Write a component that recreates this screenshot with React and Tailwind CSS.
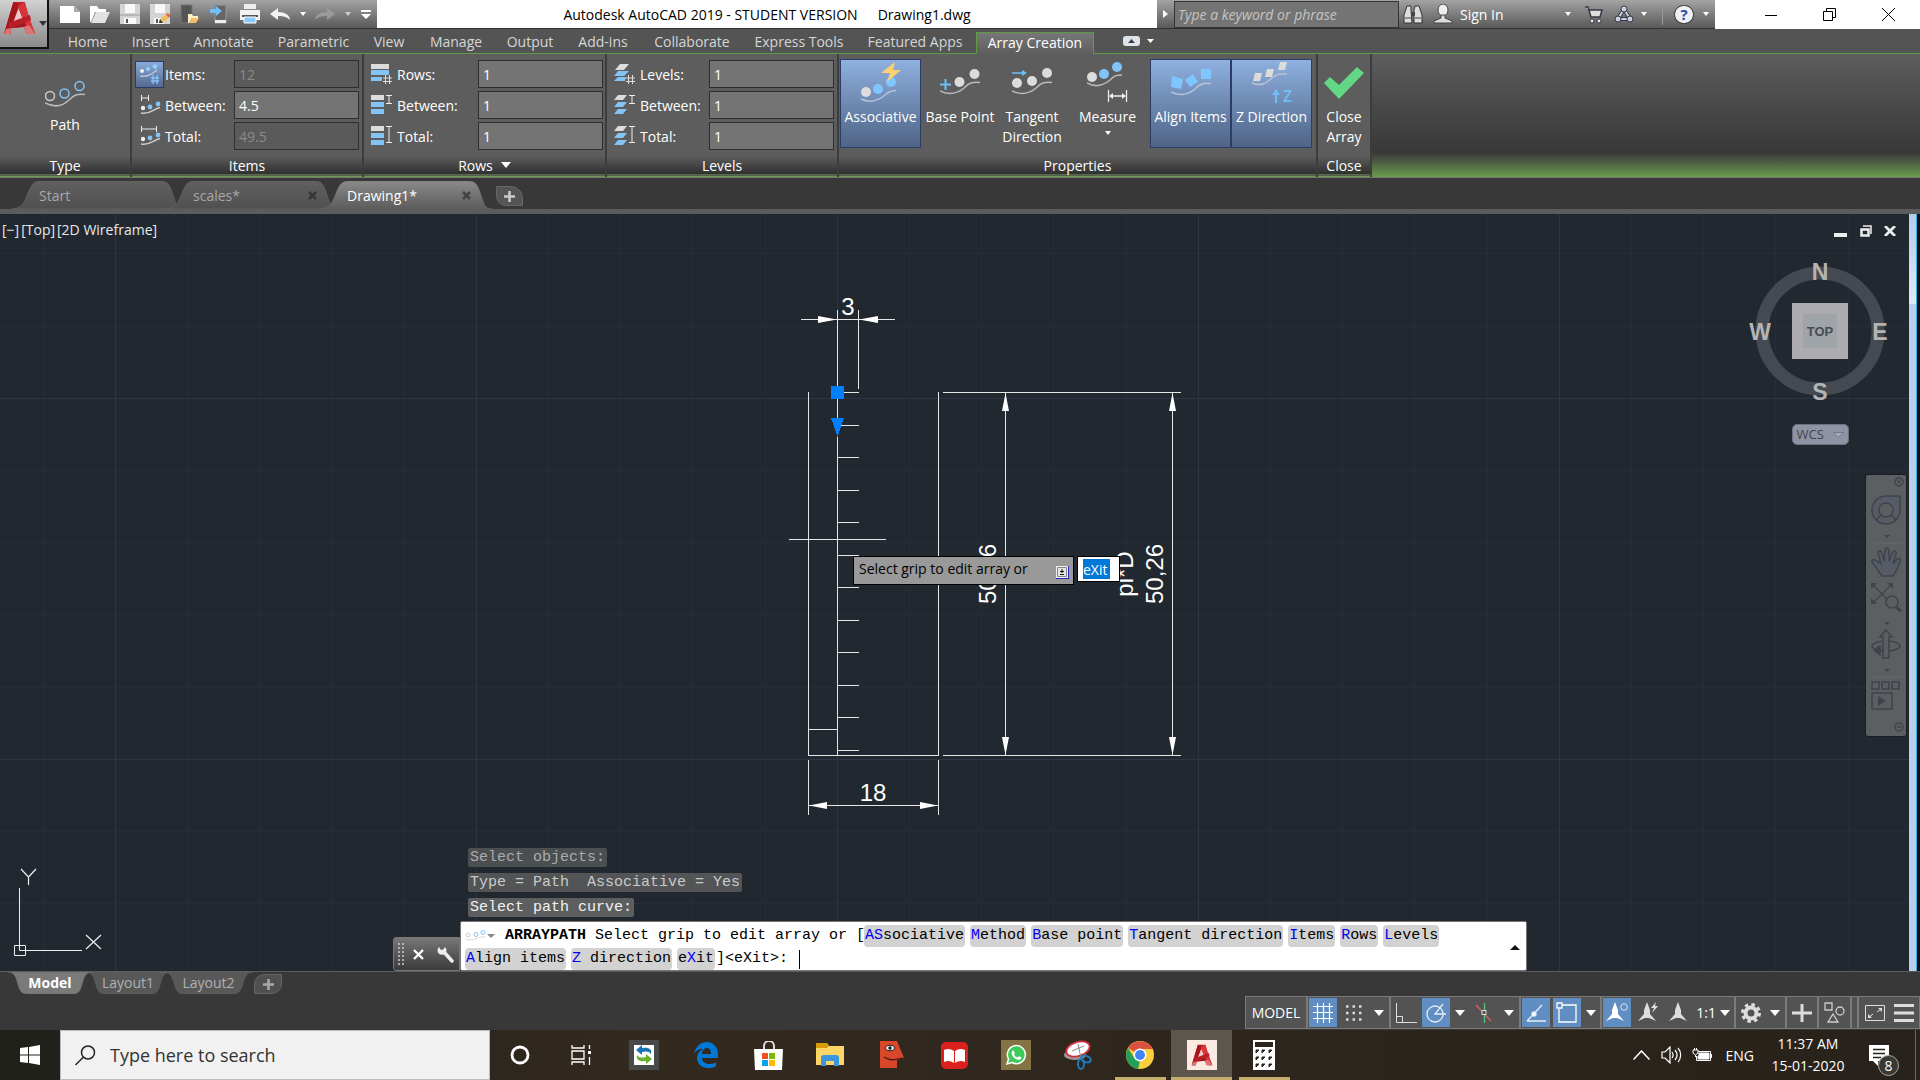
import React from "react";
import clsx from "clsx";

const BLUE = "#82c4f5";
const LIGHT = "#dcdcdc";

const MENU = [
  { name: "Home", width: "w-[65px]" },
  { name: "Insert", width: "w-[61px]" },
  { name: "Annotate", width: "w-[85px]" },
  { name: "Parametric", width: "w-[95px]" },
  { name: "View", width: "w-[56px]" },
  { name: "Manage", width: "w-[78px]" },
  { name: "Output", width: "w-[70px]" },
  { name: "Add-ins", width: "w-[76px]" },
  { name: "Collaborate", width: "w-[102px]" },
  { name: "Express Tools", width: "w-[112px]" },
  { name: "Featured Apps", width: "w-[120px]" },
];

const HISTORY = [
  { text: "Select objects:", tone: "bg-[#4c4f52] text-[#a9abad]" },
  { text: "Type = Path  Associative = Yes", tone: "bg-[#525456] text-[#c9cacb]" },
  { text: "Select path curve:", tone: "bg-[#5c5e60] text-[#f2f2f2]" },
];

const OPTIONS_TOP = [
  ["", "AS", "sociative"],
  ["", "M", "ethod"],
  ["", "B", "ase point"],
  ["", "T", "angent direction"],
  ["", "I", "tems"],
  ["", "R", "ows"],
  ["", "L", "evels"],
];

const OPTIONS_BOTTOM = [
  ["", "A", "lign items"],
  ["", "Z", " direction"],
  ["e", "X", "it"],
];

const Caret = ({ className = "text-white" }) => (
  <svg width="10" height="6" viewBox="0 0 10 6" className={className}>
    <path d="M0 0H10L5 6Z" fill="currentColor" />
  </svg>
);

const LogoA = ({ size }) => (
  <svg width={size} height={size} viewBox="0 0 32 34" preserveAspectRatio="none">
    <path d="M10 1H21L25 16L31 33H23L20 26L8 27L7 33H1L6 15Z" fill="#c42127" />
    <path d="M15 7L19 18L10 21Z" fill="#e9c9c9" />
    <path d="M10 1L16 3L9 22L26 22L20 26L8 27L7 33H1L6 15Z" fill="#a5161c" />
    <path d="M14 5L21 1L25 16L31 33H26L19 17Z" fill="#d8353a" />
    <path d="M5 22L26 14L27 19L6 28Z" fill="#b81e25" />
    <path d="M3 28L8 27L7 33H1ZM20 26L25 24L31 33H23Z" fill="#dd7474" />
  </svg>
);

/* ---------- Title bar ---------- */

const QuickIcon = ({ label, width, children }) => (
  <button aria-label={label} className={clsx("flex items-center justify-center", width)}>
    {children}
  </button>
);

const QuickAccess = () => (
  <div className="flex h-[29px] w-[328px] shrink-0 items-center bg-linear-to-b from-[#a3a3a3] to-[#5a5a5a] pl-[6px] border-b border-[#333]">
    <QuickIcon label="New" width="w-[30px]">
      <svg width="20" height="17"><path d="M0 0H14L20 6V17H0Z" fill="#fff" /><path d="M14 0V6H20Z" fill="#aaa" /></svg>
    </QuickIcon>
    <QuickIcon label="Open" width="w-[30px]">
      <svg width="20" height="17"><path d="M0 0H7L9 3H16V6H5L1 16H0Z" fill="#fff" /><path d="M6 6H20L15 17H1Z" fill="#e2e2e2" /></svg>
    </QuickIcon>
    <QuickIcon label="Save" width="w-[30px]">
      <svg width="20" height="20"><path d="M0 0H20V20H0Z" fill="#d4d4d4" /><path d="M5 0H15V9H5ZM4 14H16V20H4Z" fill="#f8f8f8" /><path d="M6 15H8V19H6Z" fill="#555" /><path d="M0 10H20V12H0Z" fill="#b8b8b8" /></svg>
    </QuickIcon>
    <QuickIcon label="Save as" width="w-[30px]">
      <svg width="20" height="20"><path d="M0 0H20V20H0Z" fill="#d4d4d4" /><path d="M5 0H15V9H5ZM4 14H14V20H4Z" fill="#f8f8f8" /><path d="M6 15H8V19H6Z" fill="#555" /><path d="M9 19L10 15L17 9L20 13L13 19Z" fill="#eebd62" /><path d="M16 10L18 9L20 11V13L18 13Z" fill="#e0605c" /><path d="M9 19L10 15L13 19Z" fill="#333" /></svg>
    </QuickIcon>
    <QuickIcon label="Open from mobile" width="w-[30px]">
      <svg width="20" height="20"><path d="M1 1H12V19H1Z" fill="#555" stroke="#777" /><path d="M8 10H12L13 12H18V14H12L9 19H8Z" fill="#fff0c8" /><path d="M12 14H19L16 19H9Z" fill="#f2c069" /></svg>
    </QuickIcon>
    <QuickIcon label="Save to mobile" width="w-[30px]">
      <svg width="20" height="20"><path d="M5 1H16V19H5Z" fill="#666" stroke="#999" /><path d="M5 16H16V19H5Z" fill="#eee" /><path d="M0 5H6V2L12 7L6 12V9H0Z" fill="#6fc0f8" /></svg>
    </QuickIcon>
    <QuickIcon label="Plot" width="w-[30px]">
      <svg width="20" height="20"><path d="M4 0H16V5H4Z" fill="#eee" /><path d="M0 6H20V16H0Z" fill="#f2f2f2" /><path d="M2 11H18V13H2Z" fill="#555" /><path d="M4 13H16V19H4Z" fill="#8bcaf8" stroke="#fff" /></svg>
    </QuickIcon>
    <QuickIcon label="Undo" width="w-[30px]">
      <svg width="21" height="13"><path d="M0 6L8 0V4C15 4 20 7 20 12C17 9 14 8 8 8V12Z" fill="#f2f2f2" /></svg>
    </QuickIcon>
    <QuickIcon label="Undo list" width="w-[15px]">
      <svg width="6" height="4"><path d="M0 0H6L3 4Z" fill="#fff" /></svg>
    </QuickIcon>
    <QuickIcon label="Redo" width="w-[30px]">
      <svg width="21" height="13"><path d="M20 6L12 0V4C5 4 0 7 0 12C3 9 6 8 12 8V12Z" fill="#9a9a9a" /></svg>
    </QuickIcon>
    <QuickIcon label="Redo list" width="w-[15px]">
      <svg width="6" height="4"><path d="M0 0H6L3 4Z" fill="#ccc" /></svg>
    </QuickIcon>
    <QuickIcon label="Customize" width="w-[21px]">
      <svg width="10" height="9"><path d="M0 0H10V2H0ZM0 4H10L5 9Z" fill="#fff" /></svg>
    </QuickIcon>
  </div>
);

const InfoCenter = () => (
  <div className="flex h-[29px] w-[558px] shrink-0 items-center border-b border-[#333] bg-linear-to-b from-[#a3a3a3] to-[#5a5a5a] text-[14px] text-white">
    <button aria-label="Collapse search" className="flex w-[17px] justify-center">
      <svg width="6" height="8"><path d="M0 0L5 4L0 8Z" fill="#fff" /></svg>
    </button>
    <input
      aria-label="Search"
      placeholder="Type a keyword or phrase"
      className="h-[27px] w-[225px] border border-[#333] bg-[#747474] px-[3px] text-[14px] italic placeholder:text-[#c4c4c4]"
    />
    <button aria-label="Find" className="flex w-[27px] justify-center">
      <svg width="20" height="19"><path d="M4 1H8V5L9 18H1V10ZM12 1H16L19 10V18H11V5Z" fill="#ddd" stroke="#333" /><path d="M8 7H12V11H8Z" fill="#444" /><path d="M2 13H8M12 13H18" stroke="#444" /></svg>
    </button>
    <button className="flex items-center gap-[7px] pl-[7px]">
      <svg width="20" height="20"><ellipse cx="10" cy="6" rx="5" ry="6" fill="#eee" stroke="#444" /><path d="M8 11H12V14L19 17V19H1V17L8 14Z" fill="#ddd" stroke="#444" /></svg>
      Sign In
    </button>
    <button aria-label="Account menu" className="ml-auto mr-[13px]"><svg width="6" height="4"><path d="M0 0H6L3 4Z" fill="#fff" /></svg></button>
    <button aria-label="App store" className="mr-[10px]">
      <svg width="20" height="19"><path d="M1 2H4L7 12H16L18 5H5" fill="#ddd" stroke="#34384a" strokeWidth="1.500" /><circle cx="8" cy="16" r="2" fill="#eee" stroke="#34384a" /><circle cx="15" cy="16" r="2" fill="#eee" stroke="#34384a" /></svg>
    </button>
    <button aria-label="Stay connected" className="mr-[9px] flex items-center gap-[7px]">
      <svg width="20" height="18"><path d="M10 4L4 14H16Z" fill="none" stroke="#34384a" strokeWidth="4" strokeLinejoin="round" /><path d="M10 4L4 14H16Z" fill="none" stroke="#ccd0dc" strokeWidth="2" /><circle cx="10" cy="4" r="3" fill="#ccd0dc" stroke="#34384a" /><circle cx="4" cy="14" r="3" fill="#ccd0dc" stroke="#34384a" /><circle cx="16" cy="14" r="3" fill="#ccd0dc" stroke="#34384a" /></svg>
      <svg width="6" height="4"><path d="M0 0H6L3 4Z" fill="#fff" /></svg>
    </button>
    <span className="mx-[6px] h-[22px] w-px bg-[#999]" />
    <button aria-label="Help" className="mx-[5px] flex h-[19px] w-[20px] items-center justify-center rounded-full border border-[#333] bg-[#eef1f6] text-[15px] font-bold leading-none text-[#2b4ba0]">
      ?
    </button>
    <button aria-label="Help menu" className="ml-[4px] mr-[6px]"><svg width="6" height="4"><path d="M0 0H6L3 4Z" fill="#fff" /></svg></button>
  </div>
);

const WindowButtons = () => (
  <div className="flex h-[29px] w-[205px] shrink-0 items-center bg-white">
    <button aria-label="Minimize" className="ml-[27px] flex w-[58px] justify-center"><svg width="12" height="12"><path d="M0 6.500H12" stroke="#000" /></svg></button>
    <button aria-label="Restore" className="flex w-[58px] justify-center"><svg width="13" height="13"><path d="M.5 3.500H9.500V12.500H.5ZM3.500 3V.5H12.500V9.500H10" fill="none" stroke="#000" /></svg></button>
    <button aria-label="Close" className="flex w-[60px] justify-center"><svg width="13" height="13"><path d="M0 0L13 13M13 0L0 13" stroke="#000" /></svg></button>
  </div>
);

const Header = () => (
  <header className="relative z-10 flex bg-[#545454]">
    <button aria-label="Application menu" className="flex h-[49px] w-[49px] shrink-0 items-start gap-[3px] border-b-2 border-r-2 border-[#111] bg-linear-to-b from-[#d2d2d2] to-[#8a8a8a] pl-[3px] pt-px">
      <LogoA size={34} />
      <svg width="8" height="5" className="mt-[20px]"><path d="M0 0H8L4 5Z" fill="#2c3540" /></svg>
    </button>
    <div className="min-w-0 flex-1">
      <div className="flex">
        <QuickAccess />
        <h1 className="flex h-[29px] flex-1 items-center justify-center gap-[20px] border-b border-[#333] bg-white text-[14px] text-black">
          <span>Autodesk AutoCAD 2019 - STUDENT VERSION</span>
          <span>Drawing1.dwg</span>
        </h1>
        <InfoCenter />
        <WindowButtons />
      </div>
      <nav className="flex h-[24px] pl-[6px] text-[14px] leading-[20px] text-[#d6d6d6]">
        {MENU.map((m) => (
          <button key={m.name} className={clsx("shrink-0 whitespace-nowrap pt-[2px] text-center", m.width)}>
            {m.name}
          </button>
        ))}
        <button className="mb-[-1px] ml-px mt-[3px] w-[118px] border border-b-0 border-[#5f9a45] bg-linear-to-b from-[#777] to-[#5e5e5e] pb-px leading-[18px] text-white">
          Array Creation
        </button>
        <button aria-label="Minimize ribbon" className="ml-[29px] flex items-center gap-[7px]">
          <svg width="17" height="10"><rect width="17" height="10" rx="3" fill="#dfe3ea" /><path d="M5 7L8.500 3L12 7Z" fill="#3b4050" /></svg>
          <svg width="7" height="4"><path d="M0 0H7L3.500 4Z" fill="#fff" /></svg>
        </button>
      </nav>
    </div>
  </header>
);

/* ---------- Ribbon ---------- */

const Panel = ({ title, width, caret, children }) => (
  <section className={clsx("flex shrink-0 flex-col border-r-2 border-[#3d3d3d] bg-[#5d5d5d]", width)}>
    <div className="h-[102px]">{children}</div>
    <h2 className="flex h-[19px] items-center justify-center gap-[8px] border-b border-[#4d7239] bg-linear-to-b from-[#5d5d5d] to-[#303030] text-[14px] text-white">
      {title}
      {caret && <Caret />}
    </h2>
    <div className="h-[2px] border-b border-[#6a9a50] bg-[#5a5a5a]" />
  </section>
);

const ItemIcon = ({ kind }) => (
  <svg width="22" height="20" fill="none">
    {kind === "count" && <path d="M14 11V20M18 11V20M12 14H20M12 17H20" stroke={BLUE} strokeWidth="1.300" />}
    {kind === "count" ? (
      <>
        <circle cx="3" cy="7" r="2" fill="#eee" />
        <circle cx="9" cy="5" r="2" fill="#8fd0ff" />
        <circle cx="16" cy="2.500" r="2.300" fill="#8fd0ff" />
        <path d="M1 12C8 13 12 11 18 6" stroke="#bcc8d8" strokeWidth="1.500" />
      </>
    ) : (
      <>
        <circle cx="4" cy="13" r="2.200" fill="#eee" />
        <circle cx="11" cy="12" r="2.400" fill={BLUE} />
        <circle cx="19" cy="9" r="2.400" fill={BLUE} />
        <path d="M2 18C11 20 14 14 21 12.500" stroke="#ccc" strokeWidth="1.500" />
        {kind === "between" ? (
          <path d="M2.500 0V6M9.500 0V6M3 3H9" stroke="#eee" />
        ) : (
          <path d="M2.500 0V6M17.500 0V6M3 3H17" stroke="#eee" />
        )}
      </>
    )}
  </svg>
);

const MeasureMark = ({ kind }) => {
  if (kind === "count") return <path d="M14.500 11V20M18.500 11V20M12 14H21M12 17.500H21" stroke="#ddd" fill="none" />;
  if (kind === "between") return <path d="M15 .5H21M15 8.500H21M18 1V8" stroke="#eee" fill="none" />;
  return <path d="M15 .5H21M15 16.500H21M18 1V16" stroke="#eee" fill="none" />;
};

const RowIcon = ({ kind }) => (
  <svg width="22" height="21">
    <path d={kind === "count" ? "M0 0H18V5H0Z" : "M0 0H13V5H0Z"} fill={LIGHT} />
    <path d={kind === "count" ? "M0 6H18V11H0ZM0 13H11V17H0Z" : "M0 7H13V12H0ZM0 14H13V19H0Z"} fill={BLUE} />
    <MeasureMark kind={kind} />
  </svg>
);

const LevelIcon = ({ kind }) => (
  <svg width="22" height="21">
    <path d={kind === "count" ? "M1 6L6 0H15L10 6Z" : "M0 5L4 0H13L9 5Z"} fill={LIGHT} />
    <path d={kind === "count" ? "M0 12L4 7H15L10 12ZM0 17L4 13H12L11 17Z" : "M0 12L4 7H13L9 12ZM0 19L4 14H13L9 19Z"} fill={BLUE} />
    <MeasureMark kind={kind} />
  </svg>
);

const Fields = ({ group, rows, labelWidth }) => (
  <div className="flex flex-col gap-[3px] pl-[3px] pt-[6px]">
    {rows.map((r) => (
      <div key={r.label} className="flex h-[28px] items-center text-[14px] text-white">
        <span
          className={clsx(
            "flex w-[29px] shrink-0 items-center justify-center",
            r.active && "h-[27px] border border-[#2c3c66] bg-linear-to-b from-[#8aaadb] to-[#53698f]"
          )}
        >
          {r.icon}
        </span>
        <label htmlFor={group + r.label} className={clsx("shrink-0 pl-px", labelWidth)}>
          {r.label}:
        </label>
        <input
          id={group + r.label}
          defaultValue={r.value}
          disabled={r.disabled}
          className={clsx(
            "h-[28px] w-[125px] border border-[#2e2e2e] px-[4px] text-[14px]",
            r.disabled ? "bg-[#5a5a5a] text-[#8c8c8c]" : "bg-[#747474] text-white"
          )}
        />
      </div>
    ))}
  </div>
);

const BigButton = ({ icon, lines, width, active, caret }) => (
  <button
    className={clsx(
      "flex h-[89px] shrink-0 flex-col items-center whitespace-nowrap text-[14px] leading-[20px] text-white",
      width,
      active && "border border-[#2c3c66] bg-linear-to-b from-[#8fb0e0] to-[#4f6586]",
      !active && "border border-transparent"
    )}
  >
    <span className="flex h-[47px] items-start pt-[2px]">{icon}</span>
    {lines.map((l) => (
      <span key={l}>{l}</span>
    ))}
    {caret && <svg width="6" height="4" className="mt-[4px]"><path d="M0 0H6L3 4Z" fill="#fff" /></svg>}
  </button>
);

const PathIcon = () => (
  <svg width="40" height="28" fill="none" strokeWidth="1.500">
    <circle cx="5" cy="16" r="4.500" stroke="#ccc" />
    <circle cx="19.500" cy="13.500" r="4.500" stroke={BLUE} />
    <circle cx="34.500" cy="6" r="4.500" stroke={BLUE} />
    <path d="M0 23C8 27 17 27 24 20C30 14 33 14 40 14.500" stroke="#bbb" />
  </svg>
);

const AssociativeIcon = () => (
  <svg width="40" height="42" fill="none">
    <circle cx="5" cy="30" r="5" fill={LIGHT} />
    <circle cx="17" cy="27" r="5" fill="#7fc6ff" />
    <circle cx="30" cy="20" r="5" fill="#7fc6ff" />
    <path d="M0 37C10 42 18 38 24 33C29 28 31 29 35 28.500" stroke="#b9c4d6" strokeWidth="1.500" />
    <path d="M34 0L20 11L29 11L26 20L40 8L32 8Z" fill="#ffd071" />
  </svg>
);

const BasePointIcon = () => (
  <svg width="40" height="36" fill="none">
    <path d="M5.500 17V28M0 22.500H11" stroke="#6fc0f8" strokeWidth="2" />
    <circle cx="19.500" cy="20" r="5" fill={LIGHT} />
    <circle cx="34.500" cy="12" r="5" fill={LIGHT} />
    <path d="M0 29C8 33 17 32 24 26C30 20 33 20 40 20.500" stroke="#bbb" strokeWidth="1.500" />
  </svg>
);

const TangentIcon = () => (
  <svg width="40" height="36" fill="none">
    <path d="M0 11H11" stroke="#6fc0f8" strokeWidth="1.500" />
    <path d="M10 8L15 11L10 14Z" fill="#6fc0f8" />
    <circle cx="5" cy="21" r="5" fill={LIGHT} />
    <circle cx="20" cy="19" r="5" fill={LIGHT} />
    <circle cx="35" cy="11" r="5" fill={LIGHT} />
    <path d="M0 29C8 33 17 32 24 26C30 20 33 20 40 20.500" stroke="#bbb" strokeWidth="1.500" />
  </svg>
);

const MeasureIcon = () => (
  <svg width="41" height="42" fill="none">
    <circle cx="5" cy="15" r="5" fill={LIGHT} />
    <circle cx="17" cy="12" r="5" fill={BLUE} />
    <circle cx="30" cy="5" r="5" fill={BLUE} />
    <path d="M0 21C9 26 17 23 23 18C28 13 30 13 35 13" stroke="#bbb" strokeWidth="1.500" />
    <path d="M21.500 28V40M39.500 28V40M23 34H38" stroke="#eee" strokeWidth="1.300" />
    <path d="M22 34L26 31V37ZM39 34L35 31V37Z" fill="#eee" />
  </svg>
);

const AlignIcon = () => (
  <svg width="40" height="36" fill="none">
    <path d="M1 14L12 17L10 27L0 25ZM14 18L22 12L27 20L19 25ZM30 7H40V17H30Z" fill="#7fc6ff" />
    <path d="M0 30C8 34 17 33 24 27C30 21 33 21 40 21.500" stroke="#b9c4d6" strokeWidth="1.500" />
  </svg>
);

const ZIcon = () => (
  <svg width="46" height="45" fill="none">
    <path d="M6 11H13L11 19H4ZM18 7H25L23 15H16ZM31 0H38L36 8H29Z" fill={LIGHT} />
    <path d="M3 21C12 25 18 21 24 15C29 11 32 12 38 12" stroke="#b9c4d6" strokeWidth="1.500" />
    <path d="M27 41V31" stroke="#6fc0f8" strokeWidth="2" />
    <path d="M23 33L27 27L31 33Z" fill="#6fc0f8" />
    <text x="34" y="40" fill="#6fc0f8" fontSize="16" fontWeight="600">Z</text>
  </svg>
);

const CheckIcon = () => (
  <svg width="40" height="42">
    <path d="M0 21L6 15L15 23L33 5L40 11L15 37Z" fill="#62d886" />
  </svg>
);

const Ribbon = () => (
  <div className="flex h-[125px] border-b border-t border-b-[#777] border-t-[#5f9a45] bg-linear-to-b from-[#5d5d5d] via-[#383838] via-80% to-[#6a9c4b]">
    <Panel title="Type" width="w-[132px]">
      <button className="flex h-full w-full flex-col items-center gap-[6px] pb-[14px] pt-[26px] text-[14px] text-white">
        <PathIcon />
        Path
      </button>
    </Panel>
    <Panel title="Items" width="w-[232px]">
      <Fields
        group="items"
        labelWidth="w-[70px]"
        rows={[
          { label: "Items", value: "12", disabled: true, active: true, icon: <ItemIcon kind="count" /> },
          { label: "Between", value: "4.5", icon: <ItemIcon kind="between" /> },
          { label: "Total", value: "49.5", disabled: true, icon: <ItemIcon kind="total" /> },
        ]}
      />
    </Panel>
    <Panel title="Rows" width="w-[243px]" caret>
      <Fields
        group="rows"
        labelWidth="w-[82px]"
        rows={[
          { label: "Rows", value: "1", icon: <RowIcon kind="count" /> },
          { label: "Between", value: "1", icon: <RowIcon kind="between" /> },
          { label: "Total", value: "1", icon: <RowIcon kind="total" /> },
        ]}
      />
    </Panel>
    <Panel title="Levels" width="w-[232px]">
      <Fields
        group="levels"
        labelWidth="w-[70px]"
        rows={[
          { label: "Levels", value: "1", icon: <LevelIcon kind="count" /> },
          { label: "Between", value: "1", icon: <LevelIcon kind="between" /> },
          { label: "Total", value: "1", icon: <LevelIcon kind="total" /> },
        ]}
      />
    </Panel>
    <Panel title="Properties" width="w-[479px]">
      <div className="flex pl-px pt-[5px]">
        <BigButton active width="w-[81px]" icon={<AssociativeIcon />} lines={["Associative"]} />
        <BigButton width="w-[78px]" icon={<BasePointIcon />} lines={["Base Point"]} />
        <BigButton width="w-[66px]" icon={<TangentIcon />} lines={["Tangent", "Direction"]} />
        <BigButton width="w-[85px]" icon={<MeasureIcon />} lines={["Measure"]} caret />
        <BigButton active width="w-[81px]" icon={<AlignIcon />} lines={["Align Items"]} />
        <BigButton active width="w-[81px]" icon={<ZIcon />} lines={["Z Direction"]} />
      </div>
    </Panel>
    <Panel title="Close" width="w-[54px]">
      <div className="flex justify-center pt-[5px]">
        <BigButton width="w-[52px]" icon={<CheckIcon />} lines={["Close", "Array"]} />
      </div>
    </Panel>
  </div>
);

/* ---------- File tabs ---------- */

const FileTab = ({ name, closable, active }) => (
  <div className={clsx("relative -mr-[18px] h-[28px] w-[172px] text-[14px]", active ? "z-10 text-white" : "text-[#a8a8a8]")}>
    <svg viewBox="0 0 172 28" preserveAspectRatio="none" className="absolute inset-0 h-full w-full">
      <defs>
        <linearGradient id={"tab" + name} x1="0" y1="0" x2="0" y2="1">
          <stop offset="0" stopColor={active ? "#8a8a8a" : "#606060"} />
          <stop offset="1" stopColor={active ? "#5c5c5c" : "#505050"} />
        </linearGradient>
      </defs>
      <path d="M0 28C10 27 12 22 16 12C20 2 22 0 30 0H148C156 0 158 4 161 14C164 23 165 28 172 28Z" fill={`url(#tab${name})`} stroke="#6c6c6c" strokeWidth=".5" />
    </svg>
    <div className="relative flex h-full items-center justify-between px-[27px]">
      <button>{name}</button>
      {closable && (
        <button aria-label={"Close " + name} className="-mr-[6px]">
          <svg width="9" height="9"><path d="M1 1L8 8M8 1L1 8" stroke={active ? "#444" : "#363636"} strokeWidth="2.500" /></svg>
        </button>
      )}
    </div>
  </div>
);

const FileTabs = () => (
  <div className="border-b-[5px] border-[#5c5c5c] bg-[#383838] pt-[3px]">
    <div className="flex pl-[12px]">
      <FileTab name="Start" />
      <FileTab name="scales*" closable />
      <FileTab name="Drawing1*" closable active />
      <button aria-label="New tab" className="ml-[22px] mt-[5px] flex h-[20px] w-[27px] items-center justify-center rounded-tr-[12px] rounded-bl-[10px] border border-[#666] bg-[#555]">
        <svg width="11" height="11"><path d="M5.500 0V11M0 5.500H11" stroke="#ccc" strokeWidth="2.500" /></svg>
      </button>
    </div>
  </div>
);

/* ---------- Drawing area ---------- */

const TICKS = [178.5, 211, 243.5, 276.5, 308.5, 341.5, 373.5, 406.5, 438.5, 471.5, 503.5, 536.5];

const Drawing = () => (
  <svg className="absolute inset-0 h-full w-full" shapeRendering="crispEdges" fontFamily="Liberation Sans, Arial, sans-serif">
    <defs>
      <pattern id="grid" x="115" y="184" width="361" height="361" patternUnits="userSpaceOnUse">
        <path d="M72.500 0V361M144.500 0V361M216.500 0V361M289.500 0V361M0 72.500H361M0 144.500H361M0 216.500H361M0 289.500H361" stroke="#262d39" />
        <path d="M.5 0V361M0 .5H361" stroke="#2d3442" strokeWidth="1" />
      </pattern>
    </defs>
    <rect width="100%" height="100%" fill="url(#grid)" />
    <g stroke="#e6e6e6" fill="none">
      <path d="M808.500 178V541.500H938.500V178" />
      <path d="M837.500 96V541M858.500 96V175M801 105.500H895" />
      <path d="M808 515.500H837M789 325.500H886" />
      {TICKS.map((y) => (
        <path key={y} d={`M837 ${y}H859`} />
      ))}
      <path d="M943 178.500H1181M943 541.500H1181M1005.500 179V541M1172.500 179V541" />
      <path d="M808.500 546V601M938.500 546V601M808 591.500H938" />
    </g>
    <g fill="#fff" shapeRendering="auto">
      <path d="M818 102L837 105.500L818 109ZM878 102L859 105.500L878 109Z" />
      <path d="M1005.500 179L1002 197H1009ZM1005.500 541L1002 523H1009Z" />
      <path d="M1172.500 179L1169 197H1176ZM1172.500 541L1169 523H1176Z" />
      <path d="M809 591.500L827 588V595ZM938 591.500L920 588V595Z" />
      <g fontSize="24" textAnchor="middle">
        <text x="848" y="101">3</text>
        <text x="873" y="587">18</text>
        <text transform="translate(996 360) rotate(-90)">50,26</text>
        <text transform="translate(1163 360) rotate(-90)">50,26</text>
        <text transform="translate(1133 360) rotate(-90)">pi*D</text>
      </g>
    </g>
    <path d="M831 172H844V185H831ZM831 204H844L837.500 223Z" fill="#0080ff" />
  </svg>
);

const DynamicPrompt = () => (
  <div className="absolute left-[853px] top-[342px] flex items-start gap-[3px]">
    <div className="flex h-[29px] w-[221px] items-start justify-between border border-black bg-[#999] pl-[5px] pr-[4px] pt-[2px] text-[14px] leading-[20px] text-black">
      <label htmlFor="grip">Select grip to edit array or</label>
      <svg width="13" height="13" className="mt-[7px]"><path d="M0 0H13V13H0Z" fill="#2a2ac8" /><path d="M0 0H12V12H0Z" fill="#eee" /><path d="M1.500 1.500H10.500V10.500H1.500Z" fill="#e4e4e4" stroke="#888" /><path d="M6 3V7M4 5.500H8M4 8.500H8" stroke="#111" /></svg>
    </div>
    <div className="h-[26px] w-[43px] border border-black bg-white pl-[5px] pt-[2px]">
      <input id="grip" defaultValue="eXit" className="block h-[20px] w-[27px] bg-[#0078d7] text-[14px] text-white" />
    </div>
  </div>
);

const UcsIcon = () => (
  <svg width="92" height="92" className="absolute bottom-[15px] left-[13px]" fill="none" stroke="#eee">
    <path d="M8 5L15.500 13V21M23 5L15.500 13" strokeWidth="1.200" />
    <path d="M73 71L88 85M88 71L73 85" strokeWidth="1.200" />
    <path d="M6.500 24V86.500H69" strokeWidth="1" />
    <path d="M1.500 81.500H12.500V91.500H1.500Z" />
  </svg>
);

const ViewCube = () => (
  <div className="absolute right-[17px] top-[45px] flex w-[144px] flex-col items-center">
    <svg width="144" height="146" fontFamily="Liberation Sans, Arial, sans-serif" fontWeight="bold" textAnchor="middle">
      <circle cx="72" cy="72" r="58" fill="none" stroke="#454a52" strokeWidth="13" />
      <rect x="44" y="44" width="56" height="56" fill="#acacae" />
      <rect x="55" y="55" width="34" height="34" fill="#9fa4a9" />
      <g fill="#b4b4b4" fontSize="23">
        <text x="72" y="21">N</text>
        <text x="72" y="141">S</text>
        <text x="12" y="81">W</text>
        <text x="132" y="81">E</text>
      </g>
      <text x="72" y="77" fontSize="13" fill="#474d56">TOP</text>
    </svg>
    <button className="mt-[19px] flex h-[21px] w-[57px] items-center justify-between rounded-[5px] border border-[#6d7080] bg-[#9093a3] px-[4px] text-[13px] text-[#41454f]">
      WCS
      <svg width="11" height="6"><path d="M.5 .5H10.500L5.500 5.500Z" fill="#a8abba" stroke="#747888" /></svg>
    </button>
  </div>
);

const NavBar = () => (
  <div className="absolute right-[2px] top-[260px] flex h-[263px] w-[42px] flex-col items-center rounded-[3px] border border-[#1a1e24] bg-[#5b5f62] text-[#3f444c]">
    <svg width="36" height="259" fill="none" stroke="currentColor" strokeWidth="1.500">
      <circle cx="31" cy="7" r="4" />
      <path d="M29 5L33 9M33 5L29 9" strokeWidth="1" />
      <g fill="#565b66">
        <path d="M18 21H32V35A14 14 0 1 1 18 21Z" />
        <circle cx="18" cy="35" r="7" fill="#5b5f62" />
        <path d="M13 40L8 45M23 40L28 45" />
        <path d="M14 101L9 94C6 89 3 88 4 85C7 84 10 86 13 89L10 78C10 75 13 75 14 78L16 86L17 75C18 72 21 73 21 76L21 86L25 77C27 75 29 77 28 79L25 89L29 84C32 82 33 84 32 87C30 93 28 97 25 101Z" />
      </g>
      <path d="M16 60H22L19 63ZM16 147H22L19 150ZM16 194H22L19 197Z" fill="currentColor" strokeWidth="0" />
      <path d="M5 110L23 128M23 110L5 128" strokeWidth="1.300" />
      <path d="M3 108V114L9 108ZM25 108V114L19 108ZM3 129V123L9 129Z" fill="currentColor" strokeWidth="0" />
      <circle cx="24" cy="127" r="6" fill="#5b5f62" />
      <path d="M28 132L33 136" strokeWidth="3" />
      <ellipse cx="18" cy="171" rx="14" ry="5" />
      <path d="M15 183V162H12L18 155L24 162H21V183Z" fill="#5b5f62" />
      <path d="M6 175L12 171V180Z" fill="currentColor" />
      <path d="M2 68H34M2 202H34" stroke="#666b6e" strokeWidth="1" />
      <path d="M4 207H11V214H4ZM14 207H21V214H14ZM24 207H31V214H24ZM4 218H24V234H4Z" />
      <path d="M10 221L18 226L10 231Z" fill="currentColor" strokeWidth="0" />
      <circle cx="31" cy="252" r="4" />
      <path d="M29 252H33" />
    </svg>
  </div>
);

const Option = ({ parts }) => (
  <button className="h-[22px] whitespace-pre rounded-[4px] bg-[#d2d2d2] px-px text-black">
    {parts[0]}
    <span className="text-[#0000f0]">{parts[1]}</span>
    {parts[2]}
  </button>
);

const CommandWindow = () => (
  <div className="absolute inset-x-0 bottom-0 pl-[393px]">
    <ul className="mb-[4px] ml-[75px] flex flex-col items-start gap-[6px] font-['Liberation_Mono',monospace] text-[15px]">
      {HISTORY.map((h) => (
        <li key={h.text} className={clsx("h-[19px] whitespace-pre rounded-[2px] px-[2px] leading-[19px]", h.tone)}>
          {h.text}
        </li>
      ))}
    </ul>
    <div className="flex items-end">
      <div className="flex h-[34px] w-[67px] items-center gap-[9px] rounded-l-[3px] border border-[#777] bg-linear-to-b from-[#777] to-[#3c3c3c] pl-[4px]">
        <svg width="6" height="22"><path d="M1 0V22M5 0V22" stroke="#ccc" strokeWidth="1.500" strokeDasharray="2 2" /></svg>
        <button aria-label="Close command line"><svg width="11" height="11"><path d="M1 1L10 10M10 1L1 10" stroke="#fff" strokeWidth="2.300" /></svg></button>
        <button aria-label="Customize command line" className="ml-[4px]">
          <svg width="17" height="18"><path d="M6 6L15 16" stroke="#eee" strokeWidth="3.500" strokeLinecap="round" /><path d="M2 2A4.500 4.500 0 1 0 8 2L6 5H4Z" fill="#eee" /></svg>
        </button>
      </div>
      <div className="flex h-[50px] w-[1067px] items-center rounded-[2px] border border-[#777] bg-white pl-[4px] pr-[6px] pt-[3px] font-['Liberation_Mono',monospace] text-[15px] text-black">
        <div className="flex flex-1 flex-col gap-px">
          <div className="flex items-center gap-[5px]">
            <span className="flex w-[35px] items-center gap-px">
              <svg width="21" height="11" fill="none"><circle cx="3" cy="5" r="2" stroke="#ccc" /><circle cx="11" cy="4.500" r="2" stroke={BLUE} /><circle cx="18" cy="2.500" r="2" stroke={BLUE} /><path d="M0 9C8 12 14 6 20 7" stroke="#ddd" /></svg>
              <svg width="8" height="4"><path d="M0 0H8L4 4Z" fill="#888" /></svg>
            </span>
            <span className="-mr-[6px] whitespace-pre">
              <b>ARRAYPATH</b> Select grip to edit array or [
            </span>
            {OPTIONS_TOP.map((o) => (
              <Option key={o[1]} parts={o} />
            ))}
          </div>
          <div className="flex items-center gap-[5px]">
            {OPTIONS_BOTTOM.map((o) => (
              <Option key={o[1]} parts={o} />
            ))}
            <label htmlFor="command" className="-ml-[4px] mr-[6px]">]&lt;eXit&gt;:</label>
            <input id="command" className="h-[19px] w-[200px] border-l border-black" />
          </div>
        </div>
        <button aria-label="Show history"><svg width="10" height="5"><path d="M0 5H10L5 0Z" fill="#111" /></svg></button>
      </div>
    </div>
  </div>
);

const Viewport = () => (
  <main className="flex min-h-0 flex-1 bg-[#212830]">
    <div className="relative min-w-0 flex-1 overflow-hidden">
      <Drawing />
      <div className="absolute left-[2px] top-[6px] flex gap-[2px] text-[14px] leading-[20px] text-[#e8e8e8]">
        <button>[−]</button>
        <button>[Top]</button>
        <button>[2D Wireframe]</button>
      </div>
      <div className="absolute right-[13px] top-[11px] flex items-center gap-[12px]">
        <button aria-label="Minimize drawing"><svg width="14" height="12"><path d="M0 8H13V12H0Z" fill="#eee" /></svg></button>
        <button aria-label="Restore drawing"><svg width="12" height="12"><path d="M3 1H11V9" fill="none" stroke="#eee" strokeWidth="1.500" /><path d="M1.500 4.500H8.500V10.500H1.500Z" fill="none" stroke="#eee" strokeWidth="2.500" /></svg></button>
        <button aria-label="Close drawing"><svg width="12" height="10"><path d="M1 0L11 10M11 0L1 10" stroke="#eee" strokeWidth="2.800" /></svg></button>
      </div>
      <ViewCube />
      <NavBar />
      <UcsIcon />
      <CommandWindow />
      <DynamicPrompt />
    </div>
    <div className="w-[8px] border-r border-[#2fb4e0] bg-[#b9cfea]">
      <div className="h-[90px] bg-linear-to-b from-[#b4cbe8] to-[#dfe9f5]" />
    </div>
    <div className="w-[3px] bg-[#0b0f14]" />
  </main>
);

/* ---------- Layout tabs and status bar ---------- */

const LayoutTab = ({ name, active, width }) => (
  <button className={clsx("relative -mr-[6px] h-[22px] text-[14px] leading-[20px]", width, active ? "z-10 font-bold text-white" : "text-[#b0b0b0]")}>
    <svg viewBox="0 0 84 22" preserveAspectRatio="none" className="absolute inset-0 h-full w-full">
      <path d="M0 0C8 1 8 7 10 13C12 20 14 22 20 22H64C70 22 72 20 74 13C76 7 76 1 84 0Z" fill={active ? "#7a7a7a" : "#585858"} stroke="#696969" strokeWidth=".5" />
    </svg>
    <span className="relative">{name}</span>
  </button>
);

const StatusCell = ({ label, active, width, children }) => (
  <button
    aria-label={label}
    className={clsx("flex h-[29px] shrink-0 items-center justify-center", width, active && "bg-[#608ec2]")}
  >
    {children}
  </button>
);

const StatusGroup = ({ width, center, children }) => (
  <div
    className={clsx(
      "flex h-[33px] shrink-0 items-center border border-[#7b7b7b] bg-[#535353]",
      center ? "justify-center" : "justify-between px-px",
      width
    )}
  >
    {children}
  </div>
);

const Compass = ({ children, fill = "#ddd" }) => (
  <svg width="24" height="22" fill="none">
    <path d="M10 0L13 8V12L19 19L12 16H8L1 19L7 12V8Z" fill={fill} />
    {children}
  </svg>
);

const StatusBar = () => (
  <div className="flex pb-px text-[14px] text-white">
    <StatusGroup width="w-[62px]" center>
      <button>MODEL</button>
    </StatusGroup>
    <StatusGroup width="w-[83px]">
      <StatusCell label="Grid" active width="w-[28px]">
        <svg width="20" height="20"><path d="M4.500 0V20M10.500 0V20M16.500 0V20M0 3.500H20M0 9.500H20M0 15.500H20" stroke="#fff" strokeWidth="1.200" /></svg>
      </StatusCell>
      <StatusCell label="Snap" width="w-[28px]">
        <svg width="16" height="16"><path d="M0 1.500H16M0 8H16M0 14.500H16" stroke="#ddd" strokeWidth="2.500" strokeDasharray="2.500 4" /></svg>
      </StatusCell>
      <StatusCell label="Snap menu" width="w-[18px]"><Caret /></StatusCell>
    </StatusGroup>
    <StatusGroup width="w-[130px]">
      <StatusCell label="Ortho" width="w-[28px]">
        <svg width="21" height="20" fill="none" stroke="#ddd"><path d="M.5 0V19.500H21M.5 13.500H6.500V19" /></svg>
      </StatusCell>
      <StatusCell label="Polar" active width="w-[28px]">
        <svg width="21" height="20" fill="none" stroke="#e6eef8" strokeWidth="1.300"><circle cx="9" cy="11" r="8" /><path d="M20 11H9L17 1" /></svg>
      </StatusCell>
      <StatusCell label="Polar menu" width="w-[16px]"><Caret /></StatusCell>
      <StatusCell label="Isometric" width="w-[28px]">
        <svg width="18" height="20" fill="none"><path d="M1 2L16 18" stroke="#c96060" strokeWidth="1.500" /><path d="M9.500 0V20" stroke="#5fc17e" strokeWidth="1.300" /><rect x="7" y="7.500" width="4" height="4" fill="#535353" stroke="#ddd" /></svg>
      </StatusCell>
      <StatusCell label="Isometric menu" width="w-[18px]"><Caret /></StatusCell>
    </StatusGroup>
    <StatusGroup width="w-[81px]">
      <StatusCell label="Tracking" active width="w-[28px]">
        <svg width="20" height="18" fill="none" stroke="#e6eef8" strokeWidth="1.300"><path d="M1 17H20M1 17L16 1" /><circle cx="8" cy="10" r="2" fill="#fff" /></svg>
      </StatusCell>
      <StatusCell label="Object snap" active width="w-[28px]">
        <svg width="21" height="21" fill="none" stroke="#fff" strokeWidth="1.300"><path d="M6 3H20V20H3V7" /><path d="M1 1H6V6H1Z" /></svg>
      </StatusCell>
      <StatusCell label="Snap modes" width="w-[16px]"><Caret /></StatusCell>
    </StatusGroup>
    <StatusGroup width="w-[134px]">
      <StatusCell label="Annotation visibility" active width="w-[28px]">
        <Compass fill="#fff"><circle cx="19" cy="5" r="3.300" stroke="#d6e4f4" /></Compass>
      </StatusCell>
      <StatusCell label="Auto scale" width="w-[28px]">
        <Compass><path d="M19 0L14 6H17L15 11L21 4H18Z" fill="#ddd" /></Compass>
      </StatusCell>
      <StatusCell label="Annotation scale" width="w-[24px]">
        <Compass />
      </StatusCell>
      <button className="flex items-center gap-[4px] pr-[3px]">1:1 <Caret /></button>
    </StatusGroup>
    <StatusGroup width="w-[51px]">
      <StatusCell label="Workspace" width="w-[28px]">
        <svg width="20" height="20" fill="none"><circle cx="10" cy="10" r="5.500" stroke="#ddd" strokeWidth="4" /><circle cx="10" cy="10" r="8.500" stroke="#ddd" strokeWidth="3" strokeDasharray="3.500 3.200" /></svg>
      </StatusCell>
      <StatusCell label="Workspace menu" width="w-[18px]"><Caret /></StatusCell>
    </StatusGroup>
    <StatusGroup width="w-[32px]" center>
      <StatusCell label="Monitor" width="w-[20px]"><svg width="20" height="18"><path d="M10 0V18M0 9H20" stroke="#ddd" strokeWidth="3" /></svg></StatusCell>
    </StatusGroup>
    <StatusGroup width="w-[33px]" center>
      <StatusCell label="Isolate" width="w-[22px]">
        <svg width="22" height="21" fill="none" stroke="#ccc" strokeWidth="1.300"><path d="M1 1H8V8H1ZM9 12L14 20H4Z" /><circle cx="16" cy="9" r="4" /></svg>
      </StatusCell>
    </StatusGroup>
    <StatusGroup width="w-[7px]" center />
    <StatusGroup width="w-[62px]">
      <StatusCell label="Clean screen" width="w-[30px]">
        <svg width="20" height="16" fill="none" stroke="#ddd"><path d="M.5 .5H19.500V15.500H.5Z" /><path d="M12 7L16 4M4 12L8 9" /><path d="M17 3V7L13 3ZM3 13V9L7 13Z" fill="#ddd" stroke="none" /></svg>
      </StatusCell>
      <StatusCell label="Customization" width="w-[28px]">
        <svg width="20" height="18"><path d="M0 1.500H20M0 9H20M0 16.500H20" stroke="#ddd" strokeWidth="3" /></svg>
      </StatusCell>
    </StatusGroup>
  </div>
);

const Footer = () => (
  <div className="flex h-[59px] justify-between border-t border-[#5c5c5c] bg-[#383838]">
    <div className="flex items-start pl-[8px]">
      <LayoutTab name="Model" active width="w-[84px]" />
      <LayoutTab name="Layout1" width="w-[84px]" />
      <LayoutTab name="Layout2" width="w-[89px]" />
      <button aria-label="New layout" className="ml-[7px] mt-[2px] flex h-[20px] w-[28px] items-center justify-center rounded-tl-[10px] rounded-br-[10px] border border-[#666] bg-[#505050]">
        <svg width="11" height="11"><path d="M5.500 0V11M0 5.500H11" stroke="#aaa" strokeWidth="2.500" /></svg>
      </button>
    </div>
    <div className="self-end">
      <StatusBar />
    </div>
  </div>
);

/* ---------- Taskbar ---------- */

const TaskIcon = ({ label, width = "w-[62px]", open, active, children }) => (
  <button
    aria-label={label}
    className={clsx("flex h-[50px] shrink-0 flex-col items-center", width, active && "bg-[#5c564c]")}
  >
    <span className="flex h-[50px] shrink-0 items-center">{children}</span>
    {open && <span className={clsx("-mt-[3px] h-[3px] bg-[#c3ae6c]", active ? "w-full" : "w-[51px]")} />}
  </button>
);

const Taskbar = () => (
  <footer className="flex h-[50px] shrink-0 items-center bg-linear-to-r from-[#20211b] via-[#33291f] via-35% to-[#27221b] text-white">
    <button aria-label="Start" className="flex w-[60px] justify-center">
      <svg width="20" height="20"><path d="M0 3L8 2V9.500H0ZM9 2L20 0V9.500H9ZM0 10.500H8V18L0 17ZM9 10.500H20V20L9 18Z" fill="#fff" /></svg>
    </button>
    <label className="flex h-[50px] w-[430px] items-center gap-[14px] border border-[#bbb] bg-[#f1f1f1] pl-[14px]">
      <svg width="21" height="21" fill="none" stroke="#222" strokeWidth="1.500"><circle cx="13" cy="7.500" r="6.500" /><path d="M8.500 12L.5 20" /></svg>
      <input placeholder="Type here to search" aria-label="Search" className="w-[300px] text-[18px] placeholder:text-[#333]" />
    </label>
    <TaskIcon label="Cortana" width="w-[60px]">
      <svg width="20" height="20" fill="none"><circle cx="10" cy="10" r="8" stroke="#fff" strokeWidth="2.800" /></svg>
    </TaskIcon>
    <TaskIcon label="Task view">
      <svg width="21" height="20" fill="none" stroke="#fff" strokeWidth="1.300"><path d="M1 0V3H13V0M1 6H13V14H1ZM1 20V17H13V20M18.500 0V4M18.500 12V20" /><path d="M18.500 6V9" strokeWidth="3" /></svg>
    </TaskIcon>
    <TaskIcon label="Sync" width="w-[63px]">
      <svg width="30" height="30"><path d="M0 0H30V30H0Z" fill="#47494b" /><path d="M5 5H25V25H5Z" fill="#fff" /><path d="M7 10L13 5V8C20 7 23 9 22 14C20 11 17 11 13 12V15Z" fill="#1673b8" /><path d="M23 19L17 24V21C10 22 7 20 8 15C10 18 13 18 17 17V14Z" fill="#67b32e" /></svg>
    </TaskIcon>
    <TaskIcon label="Edge">
      <svg width="24" height="26"><path d="M0 12C2 3 8 0 13 0C20 0 24 6 24 12V16H8C8 20 12 22 16 22C19 22 21 21 22 20V24C20 26 17 26 14 26C7 26 3 21 3 16C3 12 5 9 9 7C4 7 2 9 0 12ZM8 12H17C17 8 15 6 13 6C10 6 8 9 8 12Z" fill="#0078d7" fillRule="evenodd" /></svg>
    </TaskIcon>
    <TaskIcon label="Store">
      <svg width="29" height="29"><path d="M10 8V5A5 5 0 0 1 20 5V8" fill="none" stroke="#ddd" strokeWidth="2" /><path d="M0 8H29L28 29H1Z" fill="#fff" /><path d="M8 12H14V18H8Z" fill="#f25022" /><path d="M15 12H21V18H15Z" fill="#7fba00" /><path d="M8 19H14V25H8Z" fill="#00a4ef" /><path d="M15 19H21V25H15Z" fill="#ffb900" /></svg>
    </TaskIcon>
    <TaskIcon label="File Explorer">
      <svg width="28" height="24"><path d="M0 0H11L13 3H28V22H0Z" fill="#fdd667" /><path d="M0 0H11L13 3L11 5H0Z" fill="#d99a08" /><path d="M5 23V15C5 13 6 12 8 12H20C22 12 23 13 23 15V23H18V18H10V23Z" fill="#3a96dd" /></svg>
    </TaskIcon>
    <TaskIcon label="Face app">
      <svg width="24" height="28"><path d="M0 0H17L24 17L17 19V27H0Z" fill="#d9472b" /><ellipse cx="10" cy="7" rx="4.500" ry="2.700" fill="#eee" stroke="#222" /><circle cx="10" cy="7" r="1.800" fill="#222" /><path d="M4 16C10 20 14 19 23 17" stroke="#521a10" strokeWidth="1.500" fill="none" /></svg>
    </TaskIcon>
    <TaskIcon label="Reader">
      <svg width="27" height="27"><rect width="27" height="27" rx="5" fill="#dc201b" /><path d="M3 8C7 6 10 7 13 9V21C10 19 7 18 3 20ZM24 8C20 6 17 7 14 9V21C17 19 20 18 24 20Z" fill="#fff" /></svg>
    </TaskIcon>
    <TaskIcon label="WhatsApp">
      <svg width="30" height="30"><path d="M0 0H30V30H0Z" fill="#857443" /><path d="M6 24L7.500 19A9 9 0 1 1 11 22.500Z" fill="#3ccb5a" stroke="#fff" strokeWidth="1.500" /><path d="M12 10L14 13L13 14.500C14 16 15 17 17 17.500L18 16L20.500 17.500C20 20 18 20 16 19.500C13 18.500 10.500 15.500 10.500 12.500Z" fill="#fff" /></svg>
    </TaskIcon>
    <TaskIcon label="Snipping tool">
      <svg width="28" height="30" fill="none"><ellipse cx="11" cy="15" rx="11" ry="5" fill="#999" /><ellipse cx="14" cy="9" rx="12" ry="7" fill="#fff" stroke="#d32f3a" strokeWidth="1.800" transform="rotate(-18 14 9)" /><path d="M14 4L17 18M8 11L20 6" stroke="#888" /><ellipse cx="22" cy="19" rx="5" ry="3" stroke="#1c7bc0" strokeWidth="2" transform="rotate(20 22 19)" /><ellipse cx="17" cy="24" rx="3" ry="5" stroke="#1c7bc0" strokeWidth="2" /></svg>
    </TaskIcon>
    <TaskIcon label="Chrome" open>
      <svg width="28" height="28"><circle cx="14" cy="14" r="14" fill="#fdd03b" /><path d="M14 14L2 7A14 14 0 0 1 26.500 8H14Z" fill="#d9503f" /><path d="M2 7L9 18L14 20L12 28A14 14 0 0 1 2 7Z" fill="#25a05b" /><circle cx="14" cy="14" r="6.500" fill="#fff" /><circle cx="14" cy="14" r="5" fill="#4285f4" /></svg>
    </TaskIcon>
    <TaskIcon label="AutoCAD" width="w-[61px]" open active>
      <span className="flex h-[30px] w-[30px] items-center justify-center bg-[#fbe9e4]"><LogoA size={22} /></span>
    </TaskIcon>
    <TaskIcon label="Calculator" width="w-[64px]" open>
      <svg width="22" height="30"><path d="M0 0H22V30H0Z" fill="#fff" /><path d="M2 2H20V7H2Z" fill="#2b241c" /><path d="M3 10H6L3 13ZM9 10H12L9 13ZM16 10H19L16 13ZM3 17H6L3 20ZM9 17H12L9 20ZM16 17H19L16 20ZM3 24H6L3 27ZM9 24H12L9 27ZM16 24H19L16 27Z" fill="#2b241c" stroke="#2b241c" /></svg>
    </TaskIcon>
    <div className="ml-auto flex h-full items-center text-[14px]">
      <button aria-label="Show hidden icons" className="mr-[11px]"><svg width="17" height="10"><path d="M.5 9.500L8.500 1L16.500 9.500" fill="none" stroke="#fff" strokeWidth="1.500" /></svg></button>
      <button aria-label="Volume" className="mr-[10px]">
        <svg width="21" height="18" fill="none" stroke="#fff" strokeWidth="1.200"><path d="M1 6H4L9 1V17L4 12H1Z" /><path d="M11 6C12.500 8 12.500 10 11 12M14 4C16.500 7 16.500 11 14 14M17 2C20.500 6 20.500 12 17 16" /></svg>
      </button>
      <button aria-label="Battery" className="mr-[14px]">
        <svg width="20" height="14" fill="none" stroke="#fff"><path d="M6 3.500H18.500V12.500H4.500V8" /><path d="M7 5H17V11H6V8H7Z" fill="#fff" /><path d="M19.500 6V10M1 2H6V5L3.500 7L1 5ZM2.500 0V2M4.500 0V2M3.500 7V9" /></svg>
      </button>
      <button>ENG</button>
      <button className="ml-[16px] w-[76px] text-center leading-[22px]">
        <span className="block">11:37 AM</span>
        <span className="block">15-01-2020</span>
      </button>
      <button aria-label="Notifications" className="relative ml-[23px] mr-[16px] h-[34px] w-[30px]">
        <svg width="20" height="22" className="mt-[2px]"><path d="M0 0H20V16H9V21L4 16H0Z" fill="#fff" /><path d="M4 4.500H16M4 8.500H16M4 12.500H12" stroke="#26231c" strokeWidth="1.500" /></svg>
        <span className="absolute bottom-[-4px] right-0 flex h-[21px] w-[21px] items-center justify-center rounded-full border border-[#aaa] bg-[#3a3833] text-[14px] leading-none">8</span>
      </button>
      <span className="mr-[4px] h-full w-px bg-[#666]" />
    </div>
  </footer>
);

const App = () => (
  <div className="flex h-screen flex-col overflow-hidden bg-[#383838] font-['Open_Sans','Noto_Sans',sans-serif]">
    <Header />
    <Ribbon />
    <FileTabs />
    <Viewport />
    <Footer />
    <Taskbar />
  </div>
);

export default App;
